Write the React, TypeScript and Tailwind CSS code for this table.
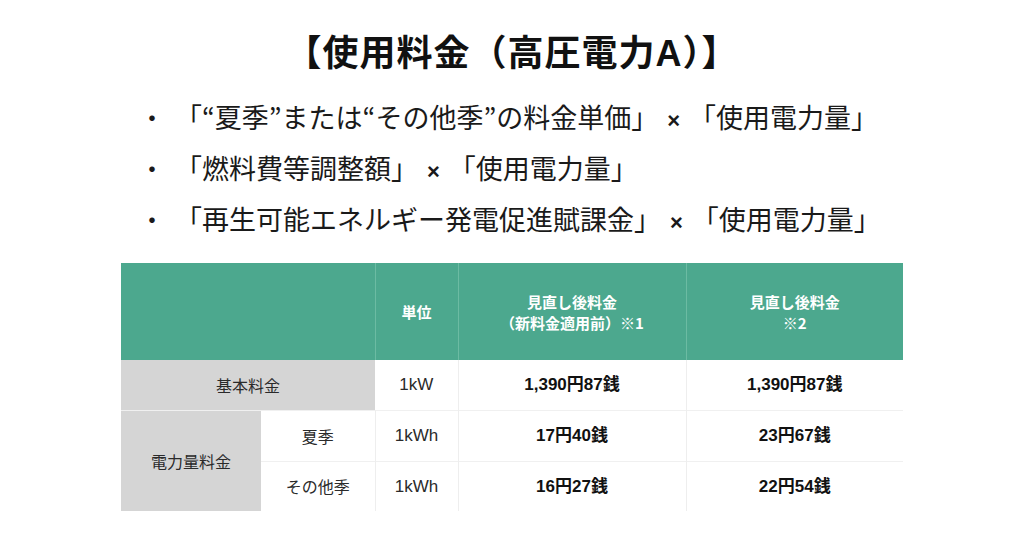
import React, { FC } from "react";

const jp = { fontFamily: '"Noto Sans CJK JP", "Noto Sans", sans-serif' };
const mixed = { fontFamily: '"Liberation Sans", "Noto Sans CJK JP", sans-serif' };

const Times: FC = () => (
  <span className="mx-[9px] text-[22px] leading-none font-bold" style={mixed}>
    ×
  </span>
);

const bullets: [string, string][] = [
  ["「“夏季”または“その他季”の料金単価」", "「使用電力量」"],
  ["「燃料費等調整額」", "「使用電力量」"],
  ["「再生可能エネルギー発電促進賦課金」", "「使用電力量」"],
];

const App: FC = () => {
  return (
    <div className="w-[1024px] h-[538px] bg-white text-[#111]" style={jp}>
      <h1
        className="pt-[31px] text-center text-[36px] leading-[46px] font-bold tracking-[1px]"
        style={mixed}
      >
        【使用料金（高圧電力A）】
      </h1>

      <ul className="mt-[14px] pl-[139px] text-[27px] text-[#1a1a1a]">
        {bullets.map(([a, b], i) => (
          <li key={i} className="flex items-center h-[51px] leading-[36px]">
            <span className="w-[36px] text-[26px]">・</span>
            <span>
              {a}
              <Times />
              {b}
            </span>
          </li>
        ))}
      </ul>

      <table className="mt-[19px] ml-[121px] w-[782px] border-collapse text-[16px] text-[#2a2a2a] table-fixed">
        <colgroup>
          <col className="w-[140px]" />
          <col className="w-[114px]" />
          <col className="w-[83px]" />
          <col className="w-[228px]" />
          <col className="w-[217px]" />
        </colgroup>
        <thead>
          <tr className="h-[97px] bg-[#4ca88e] text-white text-[15px] font-bold leading-[21px]">
            <th colSpan={2} className="border-r border-[#6cbba3]"></th>
            <th className="border-r border-[#6cbba3]">単位</th>
            <th className="border-r border-[#6cbba3]">
              見直し後料金
              <br />
              （新料金適用前）※1
            </th>
            <th>
              見直し後料金
              <br />
              ※2
            </th>
          </tr>
        </thead>
        <tbody className="text-center">
          <tr className="h-[50px] border-b border-[#f0f0f0]">
            <td colSpan={2} className="bg-[#d5d5d5]">基本料金</td>
            <td className="border-r border-[#eeeeee] text-[17px]" style={mixed}>1kW</td>
            <td className="border-r border-[#eeeeee] font-bold text-[17px] text-[#111]" style={mixed}>1,390円87銭</td>
            <td className="font-bold text-[17px] text-[#111]" style={mixed}>1,390円87銭</td>
          </tr>
          <tr className="h-[51px] border-b border-[#f0f0f0]">
            <td rowSpan={2} className="bg-[#d5d5d5]">電力量料金</td>
            <td className="border-r border-[#eeeeee]">夏季</td>
            <td className="border-r border-[#eeeeee] text-[17px]" style={mixed}>1kWh</td>
            <td className="border-r border-[#eeeeee] font-bold text-[17px] text-[#111]" style={mixed}>17円40銭</td>
            <td className="font-bold text-[17px] text-[#111]" style={mixed}>23円67銭</td>
          </tr>
          <tr className="h-[50px]">
            <td className="border-r border-[#eeeeee]">その他季</td>
            <td className="border-r border-[#eeeeee] text-[17px]" style={mixed}>1kWh</td>
            <td className="border-r border-[#eeeeee] font-bold text-[17px] text-[#111]" style={mixed}>16円27銭</td>
            <td className="font-bold text-[17px] text-[#111]" style={mixed}>22円54銭</td>
          </tr>
        </tbody>
      </table>
    </div>
  );
};

export default App;
